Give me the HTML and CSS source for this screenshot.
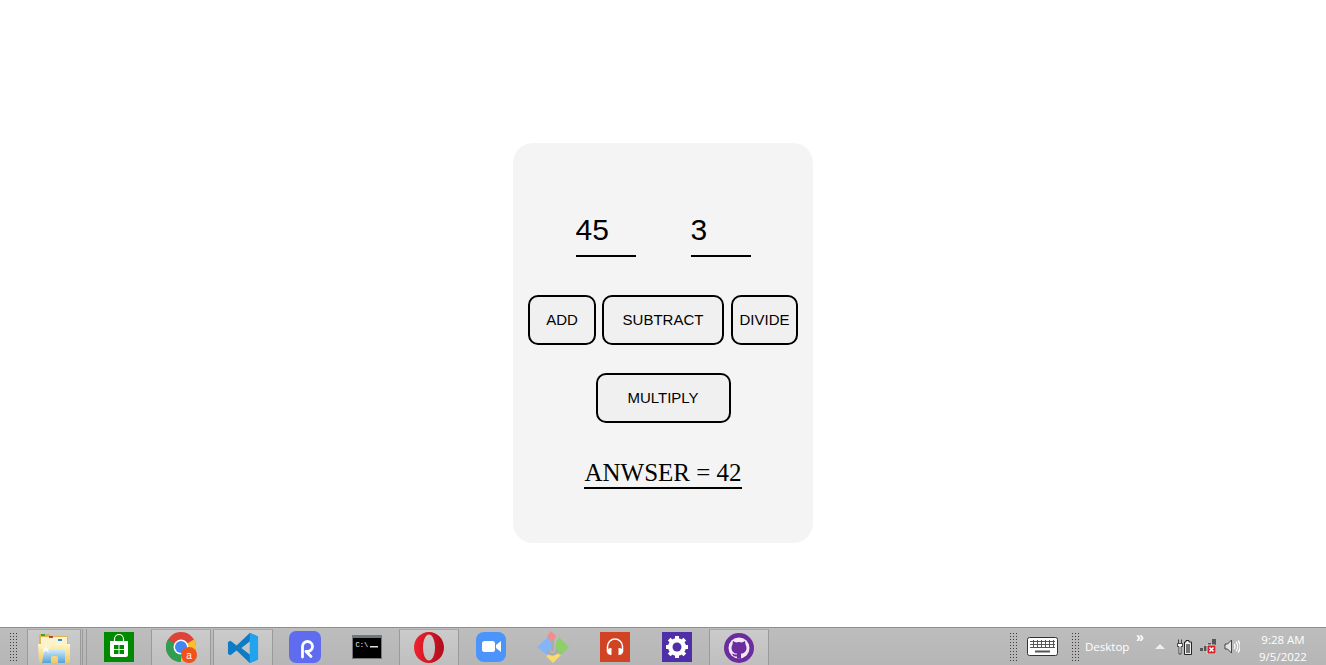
FILE: index.html
```html
<!DOCTYPE html>
<html lang="en">
<head>
    <meta charset="UTF-8">
    <meta name="viewport" content="width=device-width, initial-scale=1.0">
    <title>Calculator</title>
    <link rel="stylesheet" href="styles.css">
</head>
<body>
    <main class="page">
        <div class="calculator">
            <div class="inputs">
                <input class="number" type="text" value="45">
                <input class="number" type="text" value="3">
            </div>
            <div class="buttons">
                <button class="op op-add">ADD</button>
                <button class="op op-subtract">SUBTRACT</button>
                <button class="op op-divide">DIVIDE</button>
                <button class="op op-multiply">MULTIPLY</button>
            </div>
            <div class="answer">ANWSER = 42</div>
        </div>
    </main>

    <footer class="taskbar">
        <div class="gripper"></div>
        <div class="task active task-first">
            <svg width="32" height="30" viewBox="0 0 32 30">
                <defs>
                    <linearGradient id="folder" x1="0" y1="0" x2="0" y2="1">
                        <stop offset="0" stop-color="#fff6c8"/>
                        <stop offset="1" stop-color="#f0c860"/>
                    </linearGradient>
                    <linearGradient id="glass" x1="0" y1="0" x2="0" y2="1">
                        <stop offset="0" stop-color="#d8eef8"/>
                        <stop offset="1" stop-color="#4fa3dc"/>
                    </linearGradient>
                </defs>
                <path d="M1 2a1 1 0 0 1 1-1h9l2 2h16a1 1 0 0 1 1 1v8H1z" fill="#dcb850"/>
                <path d="M3 4h26v8H3z" fill="#fbf2cf"/>
                <rect x="3" y="1" width="4" height="2" fill="#2fa84a"/>
                <rect x="11" y="3" width="4" height="2" fill="#c8402f"/>
                <rect x="20" y="6" width="4" height="2" fill="#2f8fd8"/>
                <path d="M0 11h32v17a2 2 0 0 1-2 2H3a2 2 0 0 1-2-2z" fill="url(#folder)"/>
                <path d="M6 19a3 3 0 0 1 3-3h15a3 3 0 0 1 3 3v11h-7v-5a2 2 0 0 0-2-2h-3a2 2 0 0 0-2 2v5H4z" fill="url(#glass)"/>
                <path d="M8 11l1 4 4-1-3 2.500L11 20l-3-2.500L5 20l1-3.500L3 14l4 1z" fill="#fff" opacity=".75"/>
            </svg>
        </div>
        <div class="divider"></div>
        <div class="task">
            <svg width="30" height="30" viewBox="0 0 30 30">
                <rect width="30" height="30" fill="#008a00"/>
                <path d="M6 9h18v14a2 2 0 0 1-2 2H8a2 2 0 0 1-2-2z" fill="#fff"/>
                <path d="M10.500 11V7a4.500 4.500 0 0 1 9 0v4" fill="none" stroke="#fff" stroke-width="1.200"/>
                <path d="M10 13h4.500v4H10zm5.500 0H20v4h-4.500zM10 18h4.500v4H10zm5.500 0H20v4h-4.500z" fill="#008a00"/>
            </svg>
        </div>
        <div class="task active">
            <svg class="chrome" width="32" height="31" viewBox="0 0 32 31">
                <circle cx="15" cy="15" r="15" fill="#dc4437"/>
                <path d="M15 15L28 7.500A15 15 0 0 1 15 30z" fill="#fbc02d"/>
                <path d="M15 15L15 30A15 15 0 0 1 2 7.500z" fill="#2f9e4f"/>
                <circle cx="15" cy="15" r="7.500" fill="#fff"/>
                <circle cx="15" cy="15" r="6" fill="#4285f4"/>
                <circle cx="23" cy="23" r="8" fill="#f1511b"/>
                <text class="chrome-badge" x="23" y="26.500">a</text>
            </svg>
        </div>
        <div class="task active">
            <svg width="32" height="32" viewBox="0 0 100 100">
                <path d="M71 3L30 42 11 27 3 31v38l8 4 19-15 41 39 26-11V14zM72 29v42L45 50z" fill="#0e7cc4" fill-rule="evenodd"/>
                <path d="M71 3l26 11v72l-26 11V71V29z" fill="#22a3ee"/>
            </svg>
        </div>
        <div class="task">
            <svg width="32" height="32" viewBox="0 0 32 32">
                <rect width="32" height="32" rx="7" fill="#5f6cf0"/>
                <path d="M13.500 26V15.500a5 5 0 1 1 5 5H17l5 5" fill="none" stroke="#fff" stroke-width="2.800" stroke-linecap="round" stroke-linejoin="round"/>
            </svg>
        </div>
        <div class="task">
            <svg width="30" height="24" viewBox="0 0 30 24">
                <rect width="30" height="24" fill="#000"/>
                <rect width="30" height="3" fill="#6f757c"/>
                <rect x=".5" y=".5" width="29" height="23" fill="none" stroke="#777"/>
                <text class="cmd-prompt" x="3.500" y="12">C:\</text>
                <rect x="18" y="11" width="8" height="1.500" fill="#ddd"/>
            </svg>
        </div>
        <div class="task active">
            <svg width="30" height="31" viewBox="0 0 30 31">
                <defs>
                    <linearGradient id="opera" x1="0" y1="0" x2="1" y2="0">
                        <stop offset="0" stop-color="#f0222e"/>
                        <stop offset="1" stop-color="#b00c1c"/>
                    </linearGradient>
                </defs>
                <path d="M15 0c8.300 0 15 7 15 15.500S23.300 31 15 31 0 24 0 15.500 6.700 0 15 0zm0 2.500c-3.500 0-6 6-6 13s2.500 13 6 13 6-6 6-13-2.500-13-6-13z" fill="url(#opera)" fill-rule="evenodd"/>
            </svg>
        </div>
        <div class="task">
            <svg width="30" height="30" viewBox="0 0 30 30">
                <rect width="30" height="30" rx="8" fill="#4a94fb"/>
                <rect x="6" y="9" width="13" height="11" rx="2.500" fill="#fff"/>
                <path d="M20 13l5-4v11l-5-4z" fill="#fff"/>
            </svg>
        </div>
        <div class="task">
            <svg width="32" height="32" viewBox="0 0 32 32">
                <path d="M10 5l4-5 5 5-3 6h-3z" fill="#f38c8c"/>
                <path d="M11 6l4 8-2 7-3 3-10-8z" fill="#85b4f8"/>
                <path d="M22 6l10 10-8 8-6-6 1-6z" fill="#8ecf6a"/>
                <path d="M16 22l8 2-8 8-7-7z" fill="#f9dc70"/>
                <path d="M15.500 9v11" stroke="#a9a9a9" stroke-width="2.500"/>
                <path d="M11 19a4.500 4.500 0 0 0 9 0" fill="none" stroke="#a9a9a9" stroke-width="2.500"/>
            </svg>
        </div>
        <div class="task">
            <svg width="30" height="30" viewBox="0 0 30 30">
                <rect width="30" height="30" fill="#d04423"/>
                <path d="M7.500 20v-5.500a7.500 7.500 0 0 1 15 0V20" fill="none" stroke="#fff" stroke-width="1.500"/>
                <path d="M11.500 16v7c-3 0-4.500-1.500-4.500-3.500s1.500-3.500 4.500-3.500zM18.500 16v7c3 0 4.500-1.500 4.500-3.500S21.500 16 18.500 16z" fill="#fff"/>
            </svg>
        </div>
        <div class="task">
            <svg width="30" height="30" viewBox="0 0 30 30">
                <rect width="30" height="30" fill="#4f2fa8"/>
                <circle cx="15" cy="15" r="7" fill="none" stroke="#fff" stroke-width="4"/>
                <path d="M15 4v22M4 15h22M7.200 7.200l15.600 15.600M22.800 7.200L7.200 22.800" stroke="#fff" stroke-width="4"/>
                <circle cx="15" cy="15" r="4.500" fill="#4f2fa8"/>
            </svg>
        </div>
        <div class="task active">
            <svg width="30" height="30" viewBox="0 0 30 30">
                <circle cx="15" cy="15" r="15" fill="#6b2d9e"/>
                <circle cx="15" cy="15" r="10.500" fill="#f3e6f5"/>
                <path d="M9 8l3 1.500a11 11 0 0 1 6 0L21 8l.5 3.500a6 6 0 0 1 1 3.500c0 3.500-2.500 5.500-5.500 5.500v5h-4v-2c-3 .5-4-1-5-3 1.500 0 2.500 1.500 5 1v-1c-3 0-5.500-2-5.500-5.500a6 6 0 0 1 1-3.500z" fill="#6b2d9e"/>
            </svg>
        </div>
        <div class="tray">
            <div class="gripper"></div>
            <svg class="keyboard" width="31" height="19" viewBox="0 0 31 19">
                <rect x=".5" y=".5" width="30" height="18" rx="2" fill="#fff" stroke="#333"/>
                <path d="M3 4.500h25M3 7.500h25M3 10.500h25M6.500 3v8M10.500 3v8M14.500 3v8M18.500 3v8M22.500 3v8M26.500 3v8" stroke="#555"/>
                <path d="M8 14.500h15" stroke="#555" stroke-width="2"/>
            </svg>
            <div class="gripper"></div>
            <div class="desktop">Desktop</div>
            <div class="chevrons">»</div>
            <div class="tray-arrow"></div>
            <svg class="tray-icon" width="15" height="16" viewBox="0 0 15 16">
                <path d="M1.500 .5v4M4.500 .5v4M.5 4.500h5v3H4V15H2V7.500H.5z" fill="#fff" stroke="#222" stroke-width=".8"/>
                <path d="M9 1.500h3V3h2.500v12.500h-7V3H9z" fill="#eee" stroke="#222"/>
                <rect x="9" y="5" width="4" height="9" fill="#777"/>
            </svg>
            <svg class="tray-icon" width="16" height="15" viewBox="0 0 16 15">
                <path d="M0 9h3v3H0zM4 7h3v5H4zM8 4h3v3H8zM12 0h4v7h-4z" fill="#555"/>
                <rect x="7" y="6" width="9" height="9" rx="1.500" fill="#d8222a" stroke="#fff" stroke-width=".8"/>
                <path d="M9.500 8.500l4 4M13.500 8.500l-4 4" stroke="#fff" stroke-width="1.600"/>
            </svg>
            <svg class="speaker" width="16" height="15" viewBox="0 0 16 15">
                <path d="M1 5h2.500L7.500 1v13l-4-4H1z" fill="#e4e4e4" stroke="#444"/>
                <path d="M10 5a3.500 3.500 0 0 1 0 5M12 3a7 7 0 0 1 0 9M14 1.500a9.500 9.500 0 0 1 0 12" fill="none" stroke="#fff" stroke-width="1.300"/>
            </svg>
            <div class="clock">
                <div>9:28 AM</div>
                <div>9/5/2022</div>
            </div>
        </div>
    </footer>
</body>
</html>
```

FILE: styles.css
```css
html, body {
    height: 100%;
}

body {
    margin: 0;
    display: flex;
    flex-direction: column;
    overflow: hidden;
    background-color: #fff;
    font-family: "Liberation Sans", Arial, sans-serif;
}

.page {
    flex: 1;
    display: flex;
    justify-content: center;
    padding-top: 143px;
}

.calculator {
    width: 300px;
    height: 400px;
    box-sizing: border-box;
    padding-top: 62px;
    background-color: #f4f4f4;
    border-radius: 20px;
}

.inputs {
    display: flex;
    justify-content: center;
    gap: 55px;
}

.number {
    width: 60px;
    height: 52px;
    box-sizing: border-box;
    padding: 0;
    border: 0;
    border-bottom: 2px solid #000;
    outline: 0;
    background: transparent;
    font-family: "Liberation Sans", Arial, sans-serif;
    font-size: 30px;
    color: #000;
}

.buttons {
    display: flex;
    flex-wrap: wrap;
    justify-content: center;
    column-gap: 6px;
    row-gap: 28px;
    margin-top: 38px;
}

.op {
    height: 50px;
    box-sizing: border-box;
    padding: 0 0 2px;
    border: 2px solid #000;
    border-radius: 10px;
    background-color: #f0f0f0;
    font-family: "Liberation Sans", Arial, sans-serif;
    font-size: 15px;
    color: #000;
}

.op-add {
    width: 68px;
}

.op-subtract {
    width: 122px;
    margin-right: 1px;
}

.op-divide {
    width: 67px;
}

.op-multiply {
    width: 135px;
}

.answer {
    width: fit-content;
    margin: 36px auto 0;
    border-bottom: 2px solid #000;
    font-family: "Liberation Serif", "Times New Roman", serif;
    font-size: 25px;
    line-height: 28px;
    color: #000;
}

.taskbar {
    height: 38px;
    flex-shrink: 0;
    display: flex;
    align-items: stretch;
    box-sizing: border-box;
    border-top: 1px solid #8e8e8e;
    padding-left: 9px;
    background: linear-gradient(#bdbdbd, #b6b6b6);
}

.gripper {
    width: 9px;
    margin: 4px 0;
    background-image: radial-gradient(circle, #3c3c3c 0.8px, transparent 1px);
    background-size: 3px 3px;
}

.task {
    width: 60px;
    margin-right: 2px;
    display: flex;
    align-items: center;
    justify-content: center;
    box-sizing: border-box;
}

.active {
    border: 1px solid #9a9a9a;
    border-top-color: #a8a8a8;
    border-bottom: 0;
    margin-top: 1px;
    background: linear-gradient(#cbcbcb, #bfbfbf);
}

.task-first {
    margin-left: 9px;
    margin-right: 0;
    width: 54px;
}

.divider {
    width: 5px;
    box-sizing: border-box;
    margin: 1px 2px 0 1px;
    border-left: 1px solid #9a9a9a;
    border-right: 1px solid #9a9a9a;
}

.chrome {
    margin-left: 1px;
}

.tray {
    margin-left: auto;
    display: flex;
    align-items: center;
}

.keyboard {
    margin: 0 13px 0 9px;
}

.tray .gripper {
    align-self: stretch;
}

.desktop {
    margin-left: 5px;
    width: 43px;
    font-family: "Open Sans", sans-serif;
    font-size: 11.5px;
    white-space: nowrap;
    color: #fff;
}

.chevrons {
    width: 8px;
    margin: 0 11px 20px 8px;
    font-size: 14px;
    font-weight: bold;
    line-height: 14px;
    color: #fff;
}

.tray-arrow {
    width: 0;
    margin: 0 12px 0 0;
    border-left: 5px solid transparent;
    border-right: 5px solid transparent;
    border-bottom: 5px solid #eee;
}

.tray-icon {
    margin-right: 8px;
}

.clock {
    width: 86px;
    padding-top: 2px;
    font-family: "Open Sans", sans-serif;
    font-size: 11.5px;
    line-height: 17px;
    text-align: center;
    color: #fff;
}

.chrome-badge {
    font-family: "Liberation Sans", Arial, sans-serif;
    font-size: 10px;
    text-anchor: middle;
    fill: #fff;
}

.cmd-prompt {
    font-family: "Liberation Mono", monospace;
    font-size: 7px;
    fill: #fff;
}
```
